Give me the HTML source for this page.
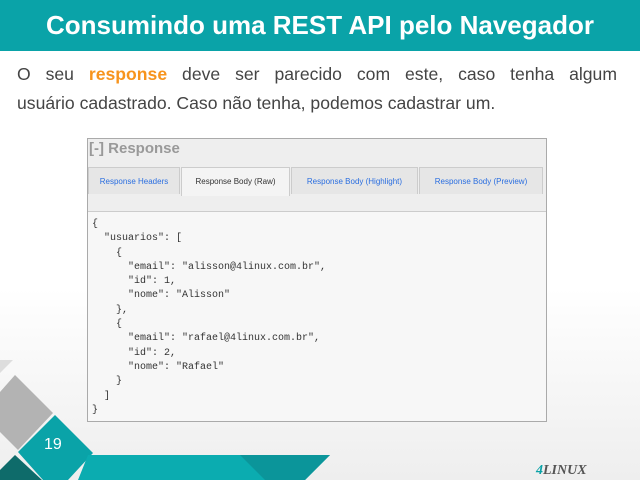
<!DOCTYPE html>
<html><head><style>
body{margin:0;width:640px;height:480px;overflow:hidden;background:linear-gradient(#fff 0,#fff 60%,#eee 100%);font-family:"Liberation Sans",sans-serif;position:relative}
.hdr{position:absolute;left:0;top:0;width:640px;height:51px;background:#0aa3a8;color:#fff;font-weight:bold;font-size:26px;text-align:center;line-height:50px}
.l{position:absolute;left:17px;width:600px;font-size:17.6px;color:#444;line-height:28px;white-space:nowrap}
.l1{top:60px;text-align:justify;text-align-last:justify;white-space:normal}
.l2{top:89px}
.l b{color:#f7941d}
.box{position:absolute;left:87px;top:138px;width:460px;height:284px;border:1px solid #aaa;background:#eee;box-sizing:border-box}
.title{position:absolute;left:1px;top:1px;font-weight:bold;font-size:15px;color:#999}
.tab{position:absolute;top:28px;height:27px;border:1px solid #ccc;border-bottom:none;background:#e6e6e6;font-size:8px;color:#2a6ee0;line-height:27px;text-align:center;box-sizing:border-box}
.tab.a{background:#f4f4f4;color:#333;height:29px}
.code{position:absolute;left:0;top:72px;width:458px;height:210px;background:#f7f7f7;border-top:1px solid #ccc;font-family:"Liberation Mono",monospace;font-size:10px;color:#333;white-space:pre;line-height:14.3px;padding:6px 0 0 4px;box-sizing:border-box}
</style></head><body>
<div class="hdr">Consumindo uma REST API pelo Navegador</div>
<div class="l l1">O seu <b>response</b> deve ser parecido com este, caso tenha algum</div>
<div class="l l2">usuário cadastrado. Caso não tenha, podemos cadastrar um.</div>
<div class="box">
<div class="title">[-] Response</div>
<div class="tab" style="left:0;width:92px">Response Headers</div>
<div class="tab a" style="left:93px;width:109px">Response Body (Raw)</div>
<div class="tab" style="left:203px;width:127px">Response Body (Highlight)</div>
<div class="tab" style="left:331px;width:124px">Response Body (Preview)</div>
<div class="code">{
  "usuarios": [
    {
      "email": "alisson@4linux.com.br",
      "id": 1,
      "nome": "Alisson"
    },
    {
      "email": "rafael@4linux.com.br",
      "id": 2,
      "nome": "Rafael"
    }
  ]
}</div>
</div>
<svg style="position:absolute;left:0;top:360px" width="640" height="120">
<polygon points="0,0 13,0 0,13" fill="#ddd"/>
<polygon points="0,32 15,15 53,53 18,90 0,72" fill="#b3b3b3"/>
<polygon points="55,55 93,93 80,107 68,120 43,120 18,92" fill="#0aa3a8"/>
<polygon points="0,110 15,95 42,120 0,120" fill="#0e6b6a"/>
<polygon points="88,95 330,95 305,120 78,120" fill="#0bacb0"/>
<polygon points="240,95 330,95 305,120 265,120" fill="#0b959a"/>
<text x="44" y="89" font-family="Liberation Sans" font-size="16" fill="#fff">19</text>
<text x="536" y="114" font-family="Liberation Serif" font-style="italic" font-weight="bold" font-size="14" fill="#555"><tspan fill="#0aa3a8">4</tspan>LINUX</text>
</svg>
</body></html>
